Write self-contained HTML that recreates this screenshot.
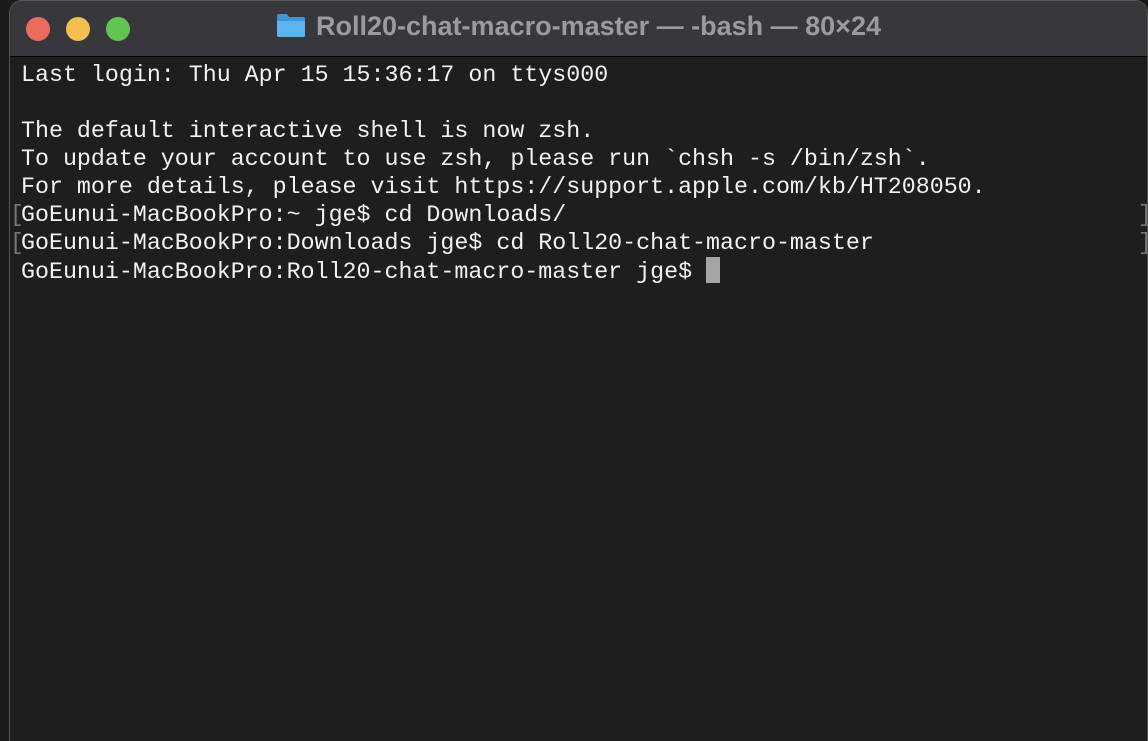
<!DOCTYPE html>
<html><head><meta charset="utf-8"><style>
html,body{margin:0;padding:0;width:1148px;height:732px;overflow:hidden;background:#1b1b1d;}
.win{position:absolute;left:10px;top:1px;width:1137px;height:740px;background:#1e1e1e;border-radius:12px 12px 0 0;overflow:hidden;box-shadow:0 0 0 1px #555;}
.tb{position:absolute;left:0;top:0;right:0;height:55px;background:#38373c;border-bottom:1px solid #000;}
.dot{position:absolute;top:16px;width:24px;height:24px;border-radius:50%;}
.title{position:absolute;left:0;right:0;top:10px;text-align:center;font:bold 27px "Liberation Sans",sans-serif;color:#9b9a9f;}
.term{position:absolute;left:11px;top:60px;font:23.3px/28px "Liberation Mono",monospace;color:#f2f2f2;white-space:pre;}
.cur{display:inline-block;width:14px;height:26px;background:#a5a5a5;vertical-align:-5px;}
.br{position:absolute;color:#777;font:23px/28px "Liberation Mono",monospace;}
</style></head><body>
<div class="win">
<div class="tb">
<div class="dot" style="left:16px;background:#ed6a5e"></div>
<div class="dot" style="left:56px;background:#f5bf4f"></div>
<div class="dot" style="left:96px;background:#61c554"></div>
<div class="title"><svg width="30" height="26" viewBox="0 0 30 26" style="vertical-align:-3px;margin-right:10px"><path d="M1 4 Q1 2 3 2 H11 L13 5 H27 Q29 5 29 7 V23 Q29 25 27 25 H3 Q1 25 1 23 Z" fill="#3e95d8"/><path d="M1 9 H29 V23 Q29 25 27 25 H3 Q1 25 1 23 Z" fill="#5db3f0"/></svg>Roll20-chat-macro-master — -bash — 80×24</div>
</div>
<div class="term">Last login: Thu Apr 15 15:36:17 on ttys000

The default interactive shell is now zsh.
To update your account to use zsh, please run `chsh -s /bin/zsh`.
For more details, please visit https://support.apple.com/kb/HT208050.
GoEunui-MacBookPro:~ jge$ cd Downloads/
GoEunui-MacBookPro:Downloads jge$ cd Roll20-chat-macro-master
GoEunui-MacBookPro:Roll20-chat-macro-master jge$ <span class="cur"></span></div>
<div class="br" style="left:0;top:200px">[</div>
<div class="br" style="left:0;top:228px">[</div>
<div class="br" style="left:1128px;top:200px">]</div>
<div class="br" style="left:1128px;top:228px">]</div>
</div>
</body></html>
